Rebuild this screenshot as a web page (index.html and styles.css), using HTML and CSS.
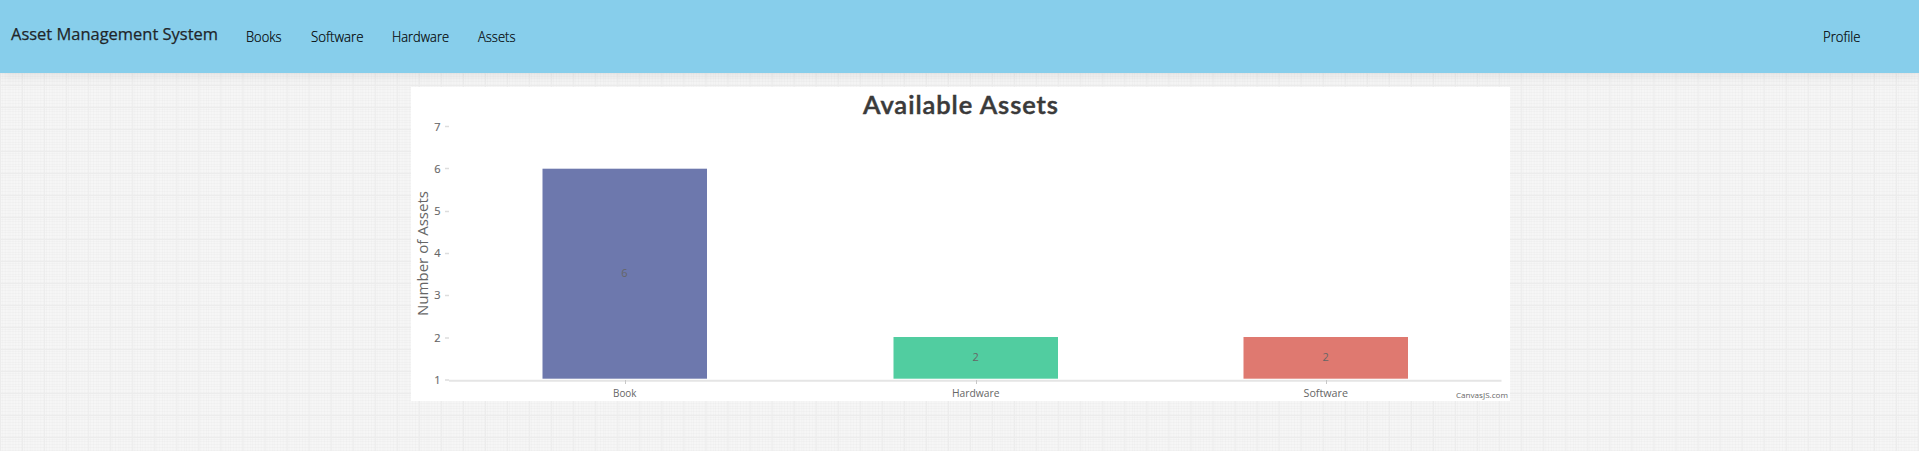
FILE: index.html
```html
<!DOCTYPE html>
<html lang="en">
<head>
<meta charset="utf-8">
<title>Asset Management System</title>
<link rel="stylesheet" href="styles.css">
</head>
<body>
<nav class="navbar">
  <a class="brand"><svg class="label" width="208" height="30"><text x="0" y="17.500" textLength="207" lengthAdjust="spacingAndGlyphs">Asset Management System</text></svg></a>
  <div class="links">
    <a><svg class="label" width="36" height="25"><text x="0" y="17.500" textLength="35.5" lengthAdjust="spacingAndGlyphs">Books</text></svg></a>
    <a><svg class="label" width="53" height="25"><text x="0" y="17.500" textLength="52.5" lengthAdjust="spacingAndGlyphs">Software</text></svg></a>
    <a><svg class="label" width="57" height="25"><text x="0" y="17.500" textLength="57" lengthAdjust="spacingAndGlyphs">Hardware</text></svg></a>
    <a><svg class="label" width="38" height="25"><text x="0" y="17.500" textLength="37.5" lengthAdjust="spacingAndGlyphs">Assets</text></svg></a>
  </div>
  <div class="links account">
    <a><svg class="label" width="38" height="25"><text x="0" y="17.500" textLength="37.5" lengthAdjust="spacingAndGlyphs">Profile</text></svg></a>
  </div>
</nav>
<main class="content">
  <svg class="chart" width="1099" height="314" viewBox="411 87 1099 314">
    <text class="title" x="863" y="114.300" textLength="195">Available Assets</text>
    <text class="axis-title" transform="translate(427.500 316) rotate(-90)" textLength="125" lengthAdjust="spacingAndGlyphs">Number of Assets</text>
    <g class="ticks">
      <text x="440.5" y="131">7</text><text x="440.5" y="172.500">6</text><text x="440.5" y="215">5</text>
      <text x="440.5" y="257">4</text><text x="440.5" y="299">3</text><text x="440.5" y="341.500">2</text><text x="440.5" y="384">1</text>
    </g>
    <path class="tick-lines" d="M445 126.500h4M445 168.500h4M445 211.500h4M445 253.500h4M445 295.500h4M445 338h4M445 380h4"/>
    <path class="baseline" d="M449 380.700H1501.500"/>
    <path class="category-ticks" d="M625.500 380v4M976.500 380v4M1326.500 380v4"/>
    <g class="bars">
      <rect class="book" x="542.500" y="168.700" width="164.500" height="210"/>
      <rect class="hardware" x="893.500" y="337" width="164.500" height="41.700"/>
      <rect class="software" x="1243.500" y="337" width="164.500" height="41.700"/>
    </g>
    <g class="values"><text x="624.500" y="277">6</text><text x="975.700" y="360.500">2</text><text x="1325.700" y="360.500">2</text></g>
    <g class="small">
      <text x="613" y="397" textLength="23.500" lengthAdjust="spacingAndGlyphs">Book</text>
      <text x="952" y="397" textLength="47.500" lengthAdjust="spacingAndGlyphs">Hardware</text>
      <text x="1303.500" y="397" textLength="44.500" lengthAdjust="spacingAndGlyphs">Software</text>
    </g>
    <text class="credit" x="1456" y="398.300" textLength="52" lengthAdjust="spacingAndGlyphs">CanvasJS.com</text>
  </svg>
</main>
</body>
</html>
```
FILE: styles.css
```css
body {
  margin: 0;
  min-height: 451px;
  font-family: "Open Sans", "Noto Sans", sans-serif;
  background-color: #f6f6f6;
  background-image:
    linear-gradient(90deg, #ececec 1px, transparent 1px),
    linear-gradient(#ececec 1px, transparent 1px),
    repeating-linear-gradient(90deg, transparent 0 1.75px, rgba(0, 0, 0, .014) 1.75px 2.75px),
    repeating-linear-gradient(transparent 0 1.75px, rgba(0, 0, 0, .014) 1.75px 2.75px);
  background-size: 22.05px 22px;
  background-position: 0 19px;
}
.navbar {
  display: flex;
  align-items: center;
  height: 73px;
  padding: 0 58px 0 10.5px;
  box-sizing: border-box;
  background: #87ceeb;
  box-shadow: 0 2px 12px rgba(0, 0, 0, .09);
}
.label { display: block; overflow: visible; }
.brand { font-size: 17px; fill: #212529; stroke: #212529; stroke-width: .25px; }
.links { display: flex; gap: 28.7px; margin-left: 27.5px; font-size: 14px; font-weight: 300; fill: #000; stroke: #000; stroke-width: .2px; }
.account { margin-left: auto; }
.content { display: flex; justify-content: center; padding-top: 14px; padding-left: 2px; }
.chart { display: block; background: #fff; fill: #666; }
.title { font: 600 25.5px Lato, sans-serif; fill: #3a3a3a; stroke: #3a3a3a; stroke-width: .5px; }
.axis-title { font-size: 14.5px; }
.ticks, .values, .small { font-size: 11px; }
.ticks { text-anchor: end; stroke: #666; stroke-width: .15px; }
.values { text-anchor: middle; }
.tick-lines { stroke: #ddd; stroke-width: 1.3px; }
.baseline { stroke: #e5e5e5; stroke-width: 2px; }
.category-ticks { stroke: #c8c8c8; stroke-width: 1px; }
.book { fill: #6d78ad; }
.hardware { fill: #51cda0; }
.software { fill: #df7970; }
.credit { font-size: 8px; }
```
